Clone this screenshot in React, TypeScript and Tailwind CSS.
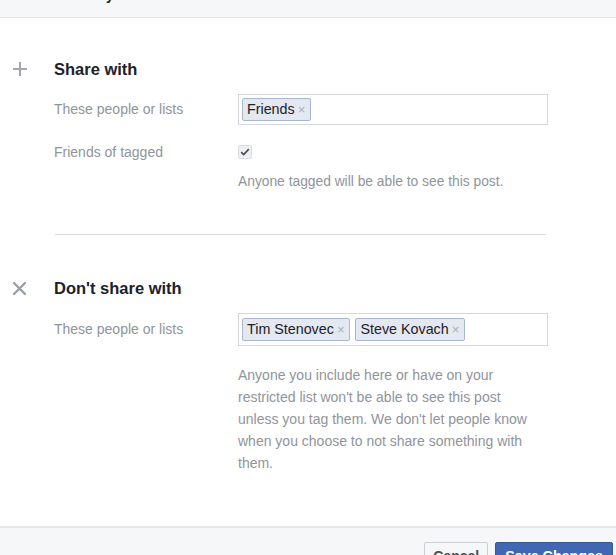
import React from "react";

function Token({ label }: { label: string }) {
  return (
    <span className="inline-flex items-center h-[23px] pl-[4px] pr-[5px] bg-[#e4e8f1] border border-[#a9b6cf] rounded-[2px] text-[14.3px] text-[#1d2129] leading-none">
      {label}
      <span className="ml-[3px] text-[13px] text-[#a9b0bd]">×</span>
    </span>
  );
}

function PlusIcon() {
  return (
    <svg width="16" height="16" viewBox="0 0 16 16" className="block">
      <path d="M8 1v14M1 8h14" stroke="#a3a7ad" strokeWidth="2" />
    </svg>
  );
}

function XIcon() {
  return (
    <svg width="15" height="15" viewBox="0 0 15 15" className="block">
      <path d="M2 2l11 11M13 2L2 13" stroke="#9a9ea6" strokeWidth="2.4" strokeLinecap="round" />
    </svg>
  );
}

export default function App() {
  return (
    <div
      className="w-[616px] h-[555px] overflow-hidden bg-white flex flex-col"
      style={{ fontFamily: '"Liberation Sans", Arial, Helvetica, sans-serif' }}
    >
      <div className="h-[18px] shrink-0 overflow-hidden bg-[#f6f7f9] border-b border-[#e3e5e8]">
        <div className="mt-[-14px] pl-[8px] text-[14px] leading-[18px] font-bold text-[#1d2129]">
          Custom Privacy
        </div>
      </div>

      {/* Share with */}
      <div className="mt-[41px] flex items-center h-[20px]">
        <div className="w-[54px] pl-[12px]">
          <PlusIcon />
        </div>
        <div className="text-[16.5px] font-bold text-[#1d2129]">Share with</div>
      </div>

      <div className="mt-[15px] flex items-center">
        <div className="w-[238px] pl-[54px] text-[14px] text-[#90949c]">These people or lists</div>
        <div className="w-[310px] h-[31px] border border-[#d3d6db] flex items-center px-[3px]">
          <Token label="Friends" />
        </div>
      </div>

      <div className="mt-[17px] flex items-center h-[20px]">
        <div className="w-[238px] pl-[54px] text-[14px] text-[#90949c]">Friends of tagged</div>
        <div className="w-[14px] h-[14px] rounded-[2px] bg-[#eeeff1] border border-[#dadde1] flex items-center justify-center">
          <svg width="10" height="8" viewBox="0 0 10 8">
            <path d="M1.2 4.2l2.5 2.4L8.8 1.2" stroke="#4b4f56" strokeWidth="1.7" fill="none" />
          </svg>
        </div>
      </div>

      <div className="mt-[10px] pl-[238px] text-[13.8px] leading-[20px] text-[#90949c]">
        Anyone tagged will be able to see this post.
      </div>

      <div className="mt-[42px] ml-[55px] w-[491px] border-t border-[#d8dadd]" />

      {/* Don't share with */}
      <div className="mt-[43px] flex items-center h-[20px]">
        <div className="w-[54px] pl-[12px]">
          <XIcon />
        </div>
        <div className="text-[16.5px] font-bold text-[#1d2129]">Don't share with</div>
      </div>

      <div className="mt-[15px] flex items-center">
        <div className="w-[238px] pl-[54px] text-[14px] text-[#90949c]">These people or lists</div>
        <div className="w-[310px] h-[33px] border border-[#d3d6db] flex items-center gap-[5px] px-[3px]">
          <Token label="Tim Stenovec" />
          <Token label="Steve Kovach" />
        </div>
      </div>

      <div className="mt-[18px] ml-[238px] w-[300px] text-[14px] leading-[22px] text-[#90949c]">
        Anyone you include here or have on your restricted list won't be able to see this post unless
        you tag them. We don't let people know when you choose to not share something with them.
      </div>

      <div className="mt-[52px] flex-1 bg-[#f6f7f9] border-t-2 border-[#e4e6e9] flex justify-end items-start gap-[7px] pt-[14px] pr-[3px]">
        <button className="h-[29px] px-[8px] bg-[#f6f7f9] border border-[#ced0d4] rounded-[2px] text-[14px] font-bold text-[#4b4f56]">
          Cancel
        </button>
        <button className="h-[29px] px-[9px] bg-[#4267b2] border border-[#365899] rounded-[2px] text-[14.3px] font-bold text-white">
          Save Changes
        </button>
      </div>
    </div>
  );
}
